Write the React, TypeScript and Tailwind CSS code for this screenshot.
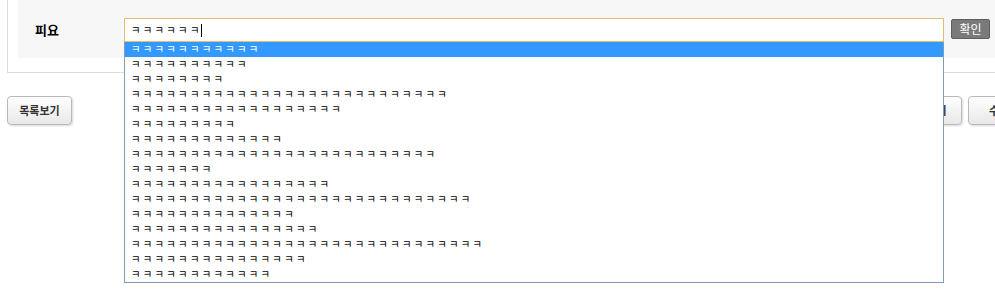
const rows = [11, 10, 8, 27, 18, 9, 13, 26, 7, 17, 29, 14, 16, 30, 15, 12];

const kk = (n: number) => Array(n).fill('ㅋ').join(' ');

export default function App() {
  return (
    <div
      className="relative h-[290px] w-[995px] overflow-hidden bg-white text-[#222]"
      style={{ fontFamily: '"Noto Sans CJK KR", "Noto Sans", sans-serif' }}
    >
      <div className="ml-[7px] w-[1020px] border-x border-b border-[#dcdcdc] pb-[14px] pl-[10px]">
        <div className="flex h-[58px] items-start bg-[#f7f7f7] pt-[18px]">
          <div className="flex h-[24px] w-[106px] items-center pl-[17px] text-[13px] font-bold text-black">
            피요
          </div>
          <div className="relative w-[820px]">
            <div className="flex h-[24px] items-center border border-[#e6be68] bg-white pl-[6px] text-[10.3px] leading-none text-black">
              <span>{kk(6)}</span>
              <span className="ml-[2px] h-[13px] w-px bg-black" />
            </div>
            <ul className="absolute left-0 top-[24px] z-10 w-[820px] border-x border-b border-[#7f9db9] bg-white text-[10.3px] text-black">
              {rows.map((n, i) => (
                <li
                  key={i}
                  className={
                    i === 0
                      ? 'flex h-[15px] items-center bg-[#3399ff] pl-[6px] leading-none text-white'
                      : 'flex h-[15px] items-center pl-[6px] leading-none'
                  }
                >
                  {kk(n)}
                </li>
              ))}
            </ul>
          </div>
          <button className="ml-[7px] mt-[1px] flex h-[20px] w-[39px] items-center justify-center rounded-[2px] border border-[#5e5e5e] bg-[#7a7a7a] text-[12px] leading-none text-white">
            확인
          </button>
        </div>
      </div>

      <div className="mt-[23px] flex w-[1040px] pl-[7px]">
        <button className="flex h-[29px] w-[65px] items-center justify-center rounded-[4px] border border-[#b9b9b9] bg-gradient-to-b from-white to-[#e8e8e8] text-[11px] font-bold text-[#333] shadow-[1px_1px_2px_rgba(0,0,0,0.15)]">
          목록보기
        </button>
        <div className="ml-[825px] flex gap-[6px]">
          <button className="flex h-[29px] w-[65px] items-center justify-center rounded-[4px] border border-[#b9b9b9] bg-gradient-to-b from-white to-[#e8e8e8] pr-[6px] text-[11px] font-bold text-[#333] shadow-[1px_1px_2px_rgba(0,0,0,0.15)]">
            답글쓰기
          </button>
          <button className="flex h-[29px] w-[65px] items-center justify-start rounded-[4px] border border-[#b9b9b9] bg-gradient-to-b from-white to-[#e8e8e8] pl-[20px] text-[11px] font-bold text-[#333] shadow-[1px_1px_2px_rgba(0,0,0,0.15)]">
            수정
          </button>
        </div>
      </div>
    </div>
  );
}
